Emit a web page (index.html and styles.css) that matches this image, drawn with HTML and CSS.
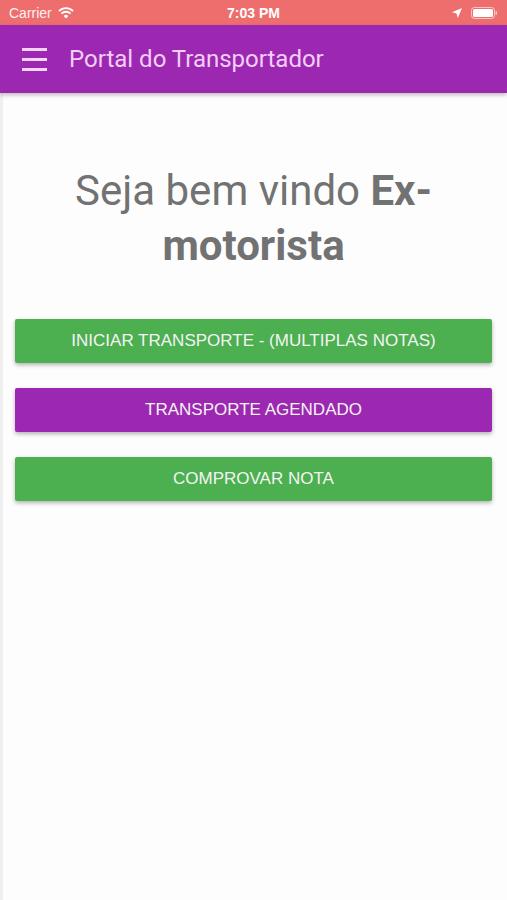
FILE: index.html
```html
<!DOCTYPE html>
<html lang="pt">
  <head>
    <meta charset="UTF-8" />
    <meta name="viewport" content="width=device-width, initial-scale=1.0" />
    <title>Portal do Transportador</title>
    <link rel="stylesheet" href="styles.css">
  </head>
  <body>
    <div class="status-bar">
      <div class="status-left">
        <span>Carrier</span>
        <svg class="wifi" width="16" height="12" viewBox="0 0 16 12">
          <path d="M8 11.5 L5.6 8.9 A3.4 3.4 0 0 1 10.4 8.9 Z" fill="#fff" />
          <path d="M3.4 6.6 A6.6 6.6 0 0 1 12.6 6.6" stroke="#fff" stroke-width="1.8" fill="none" />
          <path d="M1 4 A10 10 0 0 1 15 4" stroke="#fff" stroke-width="1.8" fill="none" />
        </svg>
      </div>
      <div class="status-time">7:03 PM</div>
      <div class="status-right">
        <svg width="12" height="12" viewBox="0 0 12 12">
          <path d="M11 1 L1 5.2 L5.6 6.4 L6.8 11 Z" fill="#fff" />
        </svg>
        <svg width="27" height="12" viewBox="0 0 27 12">
          <rect x="0.5" y="0.5" width="23" height="11" rx="3" fill="none" stroke="#fff" stroke-opacity="0.6" />
          <rect x="2" y="2" width="20" height="8" rx="1.5" fill="#fff" />
          <rect x="24.5" y="4" width="1.5" height="4" rx="0.7" fill="#fff" fill-opacity="0.6" />
        </svg>
      </div>
    </div>
    <header class="app-bar">
      <div class="menu-icon">
        <span></span>
        <span></span>
        <span></span>
      </div>
      <h1>Portal do Transportador</h1>
    </header>
    <main class="content">
      <h2 class="welcome">Seja bem vindo <b>Ex-</b><br /><b>motorista</b></h2>
      <div class="actions">
        <button type="button" class="btn btn-green">INICIAR TRANSPORTE - (MULTIPLAS NOTAS)</button>
        <button type="button" class="btn btn-purple">TRANSPORTE AGENDADO</button>
        <button type="button" class="btn btn-green">COMPROVAR NOTA</button>
      </div>
    </main>
  </body>
</html>
```

FILE: styles.css
```css
body {
  margin: 0;
  font-family: Roboto, "Liberation Sans", sans-serif;
  background-color: #fdfdfd;
  height: 900px;
  overflow: hidden;
}
.status-bar {
  height: 25px;
  background-color: #ee6e6e;
  color: #fff;
  display: flex;
  align-items: center;
  justify-content: space-between;
  padding: 0 9px;
  font-family: "Liberation Sans", sans-serif;
  font-size: 14px;
}
.status-left,
.status-right {
  width: 120px;
  display: flex;
  align-items: center;
  gap: 6px;
}
.status-left span {
  opacity: 0.9;
}
.status-right {
  justify-content: flex-end;
  gap: 8px;
}
.status-time {
  font-weight: bold;
}
.app-bar {
  height: 68px;
  background-color: #9c27b0;
  display: flex;
  align-items: center;
  padding: 0 22px;
  box-shadow: 0 2px 4px rgba(0, 0, 0, 0.25);
  position: relative;
}
.menu-icon {
  width: 25px;
  display: flex;
  flex-direction: column;
  gap: 7px;
  margin-right: 22px;
}
.menu-icon span {
  display: block;
  height: 3px;
  background-color: #f3d6f7;
}
.app-bar h1 {
  margin: 0;
  font-size: 24px;
  font-weight: 400;
  color: #f3cff7;
}
.content {
  border-left: 3px solid #efefef;
  min-height: 807px;
  padding: 0 15px 0 12px;
}
.welcome {
  margin: 0;
  padding: 70px 20px 46px;
  text-align: center;
  font-size: 42px;
  line-height: 55px;
  font-weight: 400;
  color: #727272;
}
.welcome b {
  font-weight: 700;
}
.actions {
  display: flex;
  flex-direction: column;
  gap: 25px;
}
.btn {
  height: 44px;
  border: none;
  border-radius: 2px;
  color: #f4f4f4;
  font-family: "Liberation Sans", sans-serif;
  font-size: 17px;
  box-shadow: 0 2px 4px rgba(0, 0, 0, 0.3);
}
.btn-green {
  background-color: #4caf50;
}
.btn-purple {
  background-color: #9c27b0;
}
```
